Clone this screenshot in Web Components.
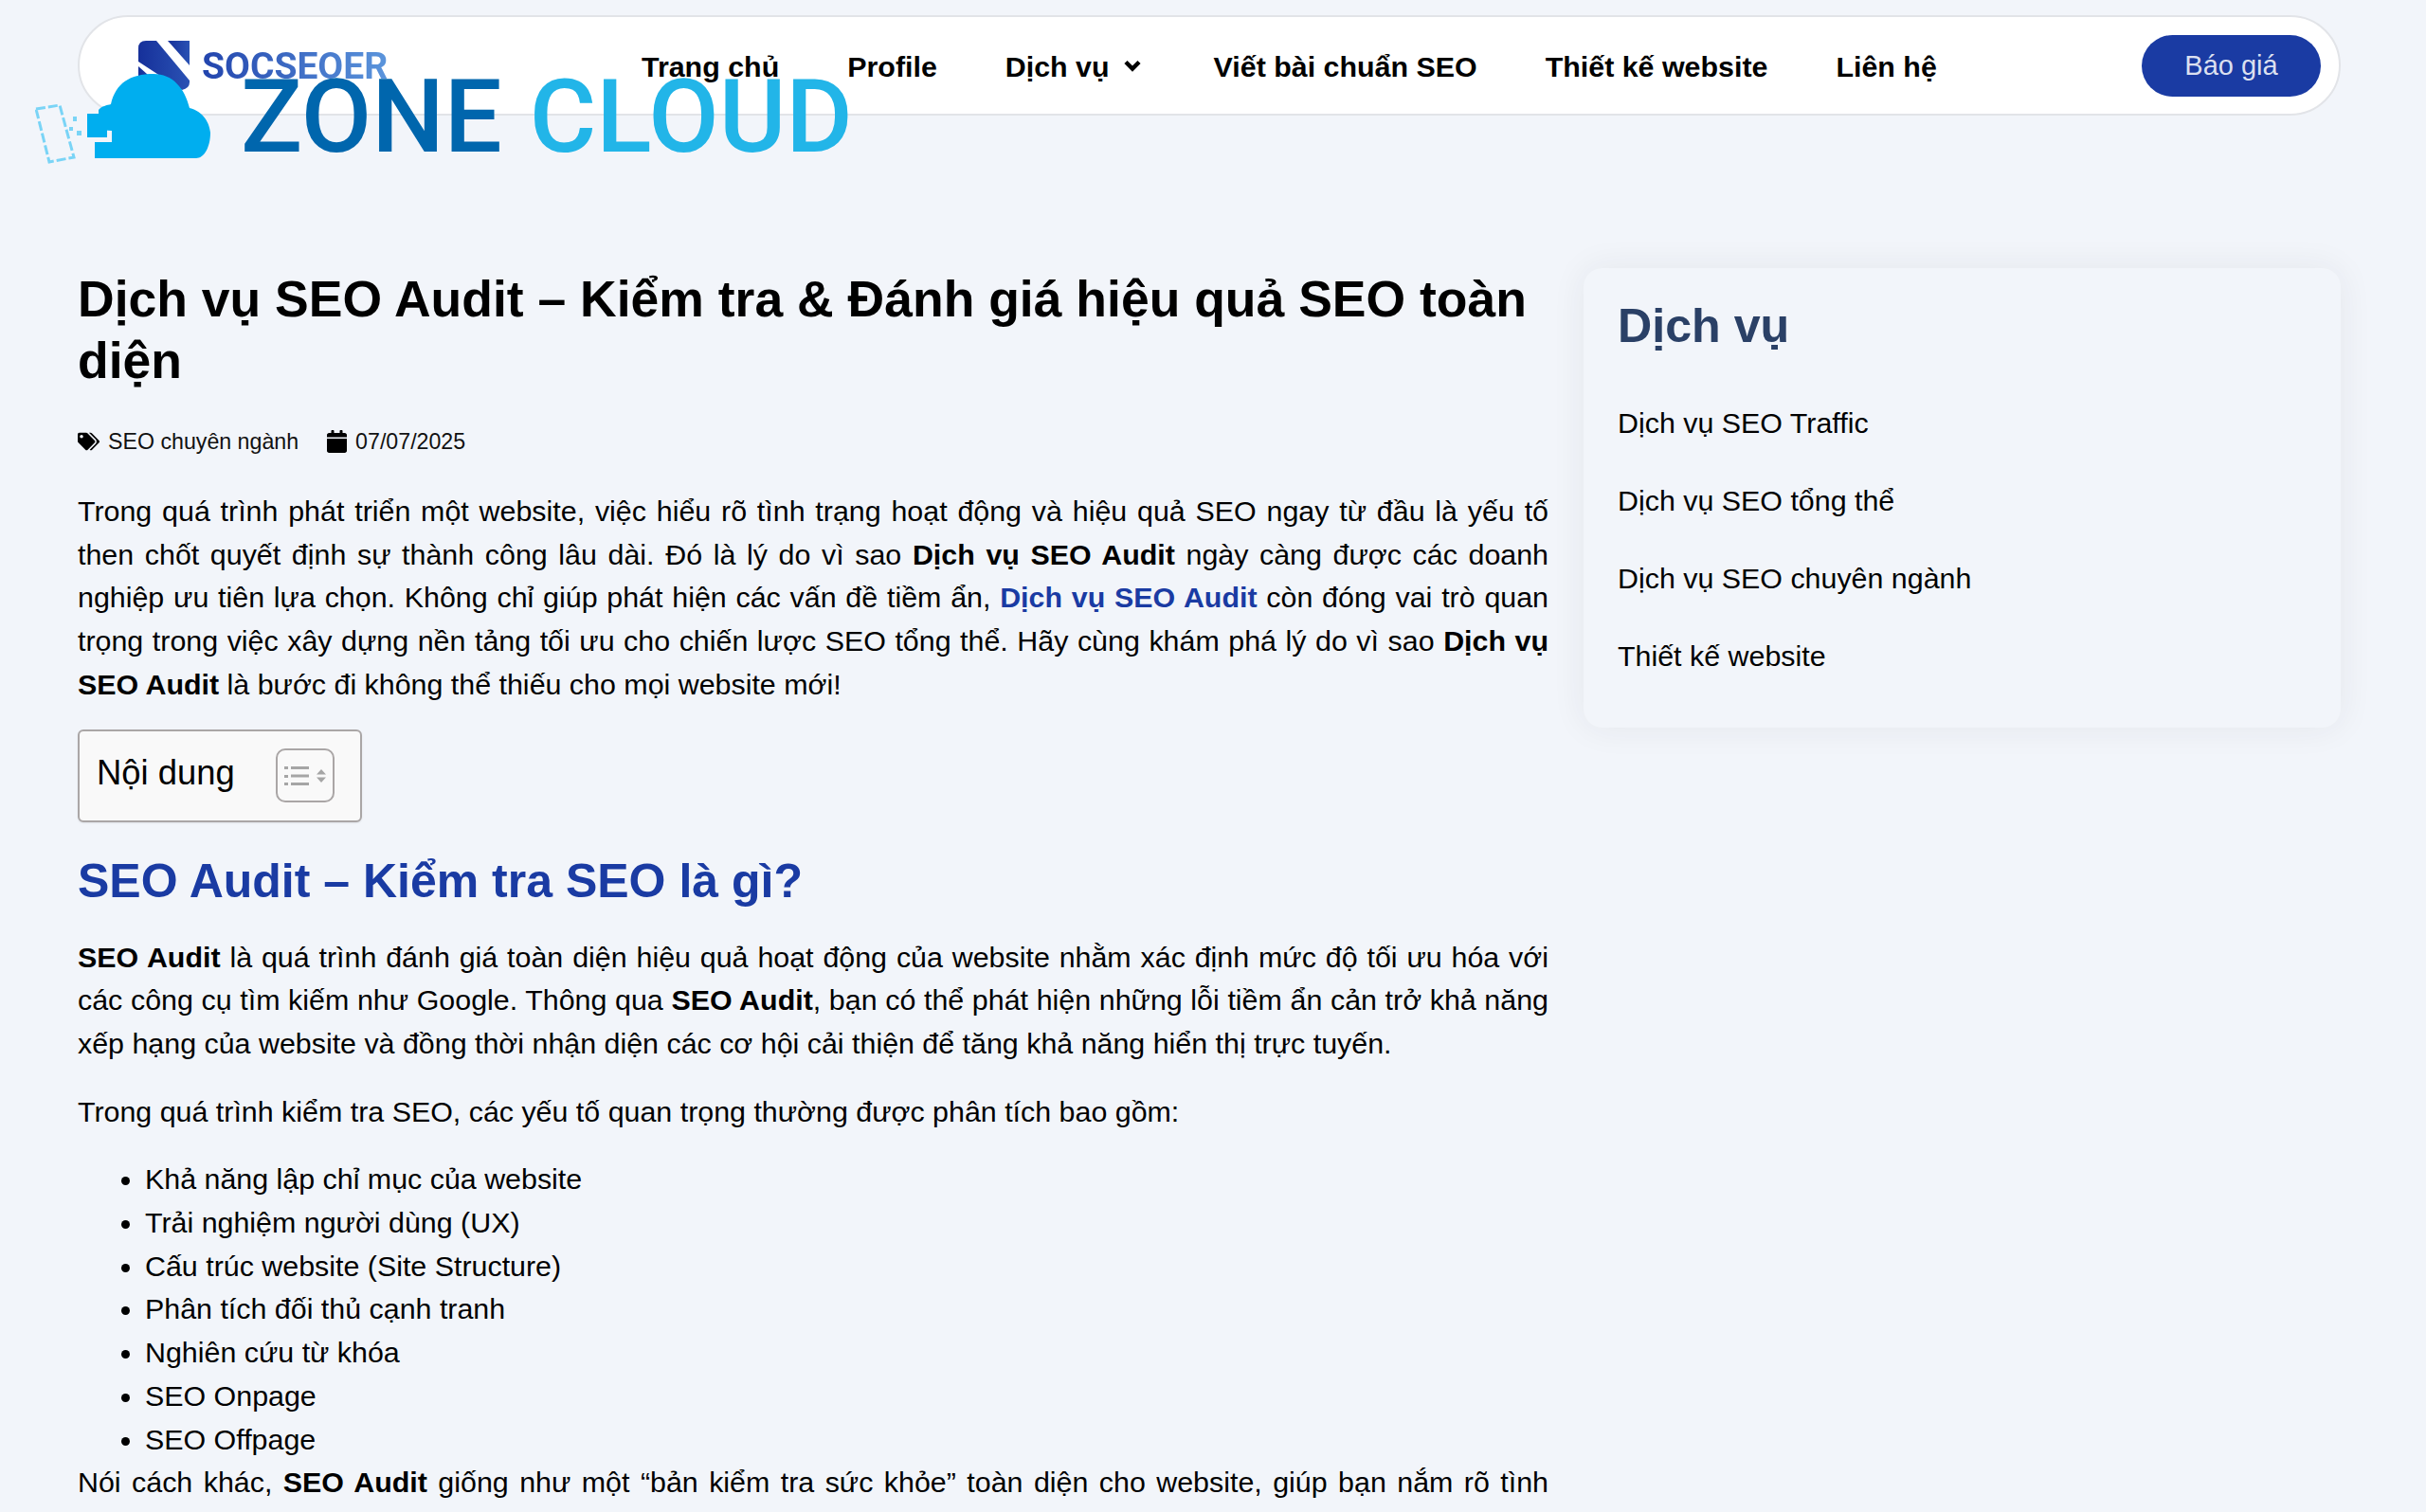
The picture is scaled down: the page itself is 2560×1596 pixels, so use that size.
<!DOCTYPE html>
<html lang="vi"><head><meta charset="utf-8"><title>Dịch vụ SEO Audit</title>
<style>
html,body{margin:0;padding:0;height:1596px;overflow:hidden;background:#f2f5fa;color:#000;font-family:"Liberation Sans",Arial,sans-serif}
</style></head><body>
<site-page>
  <site-header slot="header"></site-header>
  <seo-article slot="main"></seo-article>
  <side-card slot="side" heading="Dịch vụ">
    <a>Dịch vụ SEO Traffic</a><a>Dịch vụ SEO tổng thể</a><a>Dịch vụ SEO chuyên ngành</a><a>Thiết kế website</a>
  </side-card>
</site-page>
<script>
function def(name,html,init){customElements.define(name,class extends HTMLElement{constructor(){super();this.attachShadow({mode:'open'}).innerHTML=html;}connectedCallback(){init&&init.call(this)}})}
def('site-page',`<style>
:host{display:block;padding:16px 90px 0 82px}
.cols{display:grid;grid-template-columns:1552px 799px;column-gap:37px;margin-top:161px;align-items:start}
</style><slot name="header"></slot><div class="cols"><div><slot name="main"></slot></div><div><slot name="side"></slot></div></div>`);
def('logo-overlay',`<style>
:host{position:absolute;left:0;top:0;width:920px;height:180px;display:block;pointer-events:none}
.s{position:absolute;left:146px;top:43px}
.soc{position:absolute;left:213px;top:50px;font:700 39px/40px Roboto,sans-serif;background:linear-gradient(90deg,#2244ad,#5b95dc);-webkit-background-clip:text;background-clip:text;color:transparent}
.cloud{position:absolute;left:37px;top:78px}
.zc{position:absolute;left:254px;top:69px;font:500 108px/108px Roboto,sans-serif;white-space:nowrap;display:flex;gap:29px}
.z{color:#0066ad}.c{color:#22b5e8}
</style>
<svg class="s" width="54" height="52" viewBox="0 0 54 52"><defs><linearGradient id="g" x1="0" x2="1"><stop offset="0" stop-color="#16309a"/><stop offset="1" stop-color="#2a52b4"/></linearGradient></defs>
<path fill="url(#g)" d="M8 0H19L54 42V44Q54 50 46 52L0 22V8Q0 0 8 0z"/><path fill="url(#g)" d="M31 0H54V26z"/><path fill="url(#g)" d="M0 27L28 52H0z"/></svg>
<div class="soc">SOCSEOER</div>
<svg class="cloud" width="190" height="96" viewBox="0 0 190 96">
<path fill="#00aeef" d="M81 89V60L67 59V38C70 34 76 33 80 32C85 10 100 0 125 0C145 0 158 15 163 36C178 40 184 52 185 62C185 78 178 89 170 89z"/>
<path fill="#00aeef" d="M55 42H76V67H55zM63 72H81V89H63z"/>
<path fill="none" stroke="#7ad4f6" stroke-width="3" stroke-dasharray="10 3" d="M1 37L26 33 41 88 15 93z"/>
<path fill="#7ad4f6" d="M40 45h4v5h-4zM44 60h5v5h-5zM36 56h4v4h-4z"/></svg>
<div class="zc"><span class="z">ZONE</span><span class="c">CLOUD</span></div>`);
def('nav-link',`<style>:host{display:inline-flex;align-items:center;gap:15px;font:700 30.4px/44px "Liberation Sans",sans-serif;color:#000;white-space:nowrap}
svg{display:none;margin-right:5px}:host([caret]) svg{display:block}</style><slot></slot><svg width="18" height="13" viewBox="0 0 18 13"><path d="M2 2.500l7 7 7-7" fill="none" stroke="#000" stroke-width="4.500"/></svg>`);
def('quote-button',`<style>:host{display:flex;align-items:center;justify-content:center;width:189px;height:65px;border-radius:33px;background:#1a3ba3;color:rgba(255,255,255,.85);font:400 29px "Liberation Sans",sans-serif}</style><slot></slot>`);
def('site-header',`<style>
:host{display:flex;align-items:center;box-sizing:border-box;height:106px;border:2px solid #e2e4e8;border-radius:53px;background:#fff;padding:0 19px 0 0;justify-content:space-between}
nav{display:flex;gap:72px;margin-left:593px;padding-top:1px}
</style><nav><nav-link>Trang chủ</nav-link><nav-link>Profile</nav-link><nav-link caret>Dịch vụ</nav-link><nav-link>Viết bài chuẩn SEO</nav-link><nav-link>Thiết kế website</nav-link><nav-link>Liên hệ</nav-link></nav><quote-button>Báo giá</quote-button><logo-overlay></logo-overlay>`);
def('post-meta',`<style>
:host{display:flex;align-items:center;gap:30px;font:400 23.200px/30px "Liberation Sans",sans-serif;color:#111}
span{display:inline-flex;align-items:center;gap:9px}</style>
<span><svg width="23" height="20" viewBox="0 0 640 512"><path d="M497.9 225.9L286.1 14.1A48 48 0 0 0 252.1 0H48C21.5 0 0 21.5 0 48v204.1a48 48 0 0 0 14.1 33.9l211.9 211.9c18.7 18.7 49.1 18.7 67.9 0l204.1-204.1c18.7-18.7 18.7-49.1-.1-67.9zM112 160c-26.5 0-48-21.5-48-48s21.5-48 48-48 48 21.5 48 48-21.5 48-48 48zm513.9 133.8L421.800 497.900c-18.700 18.700-49.100 18.700-67.900 0l-.4-.4L527.600 323.500c17-17 26.400-39.600 26.400-63.600s-9.400-46.600-26.400-63.600L331.400 0h48.700a48 48 0 0 1 33.900 14.100l211.900 211.800c18.700 18.700 18.700 49.100 0 67.900z"/></svg>SEO chuyên ngành</span>
<span><svg width="21" height="24" viewBox="0 0 448 512"><path d="M0 464c0 26.500 21.500 48 48 48h352c26.500 0 48-21.500 48-48V192H0v272zM400 64h-48V16c0-8.800-7.200-16-16-16h-32c-8.800 0-16 7.200-16 16v48H160V16c0-8.800-7.200-16-16-16h-32c-8.800 0-16 7.200-16 16v48H48C21.500 64 0 85.500 0 112v48h448v-48c0-26.500-21.500-48-48-48z"/></svg>07/07/2025</span>`);
def('toc-box',`<style>
:host{display:flex;align-items:center;justify-content:space-between;box-sizing:border-box;width:300px;height:98px;border:2px solid #aaa6a6;border-radius:6px;background:#f9f9f9;padding:0 27px 0 18px;font:400 36.400px/50px "Liberation Sans",sans-serif;box-shadow:0 1px 2px rgba(0,0,0,.08)}
.l{margin-top:-5px}
.t{display:flex;align-items:center;justify-content:center;box-sizing:border-box;width:62px;height:57px;border:2px solid #aaa6a6;border-radius:10px}
</style><span class="l">Nội dung</span><span class="t"><svg width="44" height="22" viewBox="0 0 44 22" fill="#a5a5a5"><rect x="0" y="1" width="4" height="3"/><rect x="0" y="10" width="4" height="3"/><rect x="0" y="18" width="4" height="3"/><rect x="7" y="1" width="19" height="3"/><rect x="7" y="9.500" width="19" height="3"/><rect x="7" y="18" width="19" height="3"/><path d="M34 9.500l5-5.500 5 5.500zM34 12.500h10l-5 5.500z"/></svg></span>`);
def('side-card',`<style>
:host{display:block;box-sizing:border-box;height:485px;border-radius:20px;background:#f2f5fa;box-shadow:0 0 36px rgba(40,40,60,.07);padding:28px 36px}
h3{margin:0 0 48px;font:700 50.200px/66px "Liberation Sans",sans-serif;color:#2a4066}
::slotted(a){display:block;font:400 30.400px/42px "Liberation Sans",sans-serif;color:#000;margin-bottom:40px}
</style><h3></h3><slot></slot>`,function(){this.shadowRoot.querySelector('h3').textContent=this.getAttribute('heading')});
def('seo-article',`<style>
:host{display:block;font:400 30.400px/45.700px "Liberation Sans",sans-serif;color:#000}
h1{font:700 53.500px/65px "Liberation Sans",sans-serif;margin:0 0 38px}
h2{font:700 50px/60px "Liberation Sans",sans-serif;color:#1a3ba3;margin:32px 0 28px}
p{margin:0 0 26px;text-align:justify}
p.i{margin-bottom:24px}
ul{margin:0;padding:0 0 0 71px}
a{color:#1a3ba3;font-weight:700}
post-meta{margin-bottom:36px}
</style>
<h1>Dịch vụ SEO Audit – Kiểm tra &amp; Đánh giá hiệu quả SEO toàn diện</h1>
<post-meta></post-meta>
<p class="i">Trong quá trình phát triển một website, việc hiểu rõ tình trạng hoạt động và hiệu quả SEO ngay từ đầu là yếu tố then chốt quyết định sự thành công lâu dài. Đó là lý do vì sao <b>Dịch vụ SEO Audit</b> ngày càng được các doanh nghiệp ưu tiên lựa chọn. Không chỉ giúp phát hiện các vấn đề tiềm ẩn, <a>Dịch vụ SEO Audit</a> còn đóng vai trò quan trọng trong việc xây dựng nền tảng tối ưu cho chiến lược SEO tổng thể. Hãy cùng khám phá lý do vì sao <b>Dịch vụ SEO Audit</b> là bước đi không thể thiếu cho mọi website mới!</p>
<toc-box></toc-box>
<h2>SEO Audit – Kiểm tra SEO là gì?</h2>
<p><b>SEO Audit</b> là quá trình đánh giá toàn diện hiệu quả hoạt động của website nhằm xác định mức độ tối ưu hóa với các công cụ tìm kiếm như Google. Thông qua <b>SEO Audit</b>, bạn có thể phát hiện những lỗi tiềm ẩn cản trở khả năng xếp hạng của website và đồng thời nhận diện các cơ hội cải thiện để tăng khả năng hiển thị trực tuyến.</p>
<p>Trong quá trình kiểm tra SEO, các yếu tố quan trọng thường được phân tích bao gồm:</p>
<ul><li>Khả năng lập chỉ mục của website</li><li>Trải nghiệm người dùng (UX)</li><li>Cấu trúc website (Site Structure)</li><li>Phân tích đối thủ cạnh tranh</li><li>Nghiên cứu từ khóa</li><li>SEO Onpage</li><li>SEO Offpage</li></ul>
<p>Nói cách khác, <b>SEO Audit</b> giống như một “bản kiểm tra sức khỏe” toàn diện cho website, giúp bạn nắm rõ tình trạng hiện tại, từ đó đưa ra chiến lược tối ưu phù hợp và hiệu quả hơn cho website của mình.</p>`);
</script>
</body></html>
